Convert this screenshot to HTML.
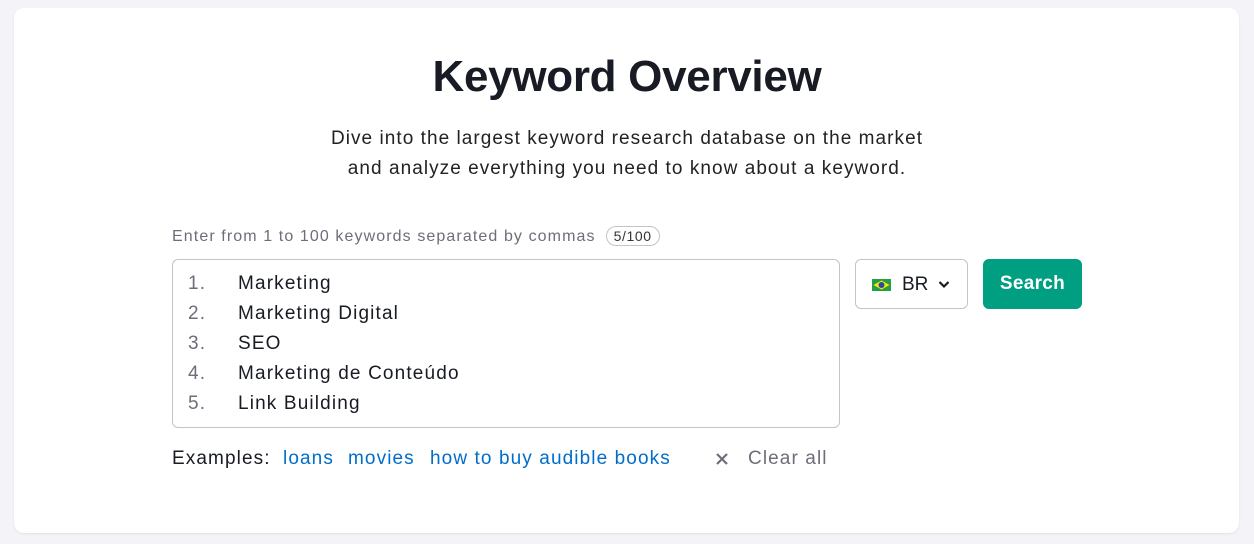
<!DOCTYPE html>
<html><head><meta charset="utf-8"><style>
body{margin:0;width:1254px;height:544px;background:#f4f4f8;font-family:"Liberation Sans",sans-serif;position:relative;overflow:hidden}
.card{position:absolute;left:14px;top:8px;width:1225px;height:525px;background:#fff;border-radius:10px;box-shadow:0 1px 2px rgba(0,0,0,.08)}
.abs{position:absolute}
h1{position:absolute;left:0;width:1254px;top:52px;margin:0;text-align:center;font-size:44px;font-weight:bold;color:#181b24;letter-spacing:-0.3px}
.sub{left:0;width:1254px;text-align:center;top:124px;font-size:19px;line-height:30px;color:#222;letter-spacing:1.05px}
.lbl{left:172px;top:226px;font-size:16px;color:#6c6e79;letter-spacing:1.1px}
.pill{display:inline-block;border:1px solid #c2c4cd;border-radius:11px;padding:1px 7px;font-size:14px;color:#333;margin-left:10px;letter-spacing:0.6px}
.ta{left:172px;top:259px;width:666px;height:167px;border:1px solid #c2c4cd;border-radius:6px}
.row{position:absolute;font-size:19px;color:#181b24;letter-spacing:1.15px}
.row span{position:absolute;left:-50px;color:#6c6e79}
.sel{left:855px;top:259px;width:111px;height:48px;border:1px solid #c2c4cd;border-radius:6px;font-size:19px;color:#181b24}
.btn{left:983px;top:259px;width:99px;height:50px;background:#009f81;border-radius:6px;color:#fff;font-size:19px;font-weight:bold;text-align:center;line-height:50px;letter-spacing:0.3px}
.ex{top:448px;font-size:19px;letter-spacing:1.1px}
a{color:#006dca;text-decoration:none}
</style></head><body>
<div class="card"></div>
<h1>Keyword Overview</h1>
<div class="abs sub">Dive into the largest keyword research database on the market<br>and analyze everything you need to know about a keyword.</div>
<div class="abs lbl">Enter from 1 to 100 keywords separated by commas<span class="pill">5/100</span></div>
<div class="abs ta"></div>
<div class="row" style="left:238px;top:273px"><span>1.</span>Marketing</div>
<div class="row" style="left:238px;top:303px"><span>2.</span>Marketing Digital</div>
<div class="row" style="left:238px;top:333px"><span>3.</span>SEO</div>
<div class="row" style="left:238px;top:363px"><span>4.</span>Marketing de Conteúdo</div>
<div class="row" style="left:238px;top:393px"><span>5.</span>Link Building</div>
<div class="abs sel">
<svg class="abs" style="left:16px;top:19px" width="19" height="12"><rect width="19" height="12" fill="#229e45"/><polygon points="9.5,1.5 17.5,6 9.5,10.5 1.5,6" fill="#f8e509"/><circle cx="9.5" cy="6" r="3" fill="#2b49a3"/></svg>
<span class="abs" style="left:46px;top:14px">BR</span>
<svg class="abs" style="left:82px;top:20px" width="12" height="9"><path d="M1.5 2 L6 6.5 L10.5 2" stroke="#181b24" stroke-width="2.2" fill="none"/></svg>
</div>
<div class="abs btn">Search</div>
<div class="abs ex" style="left:172px;color:#181b24">Examples:</div>
<div class="abs ex" style="left:283px"><a>loans</a></div>
<div class="abs ex" style="left:348px"><a>movies</a></div>
<div class="abs ex" style="left:430px"><a>how to buy audible books</a></div>
<svg class="abs" style="left:715px;top:452px" width="14" height="14"><path d="M2 2L12 12M12 2L2 12" stroke="#6c6e79" stroke-width="2.2"/></svg>
<div class="abs ex" style="left:748px;color:#6c6e79">Clear all</div>
</body></html>
